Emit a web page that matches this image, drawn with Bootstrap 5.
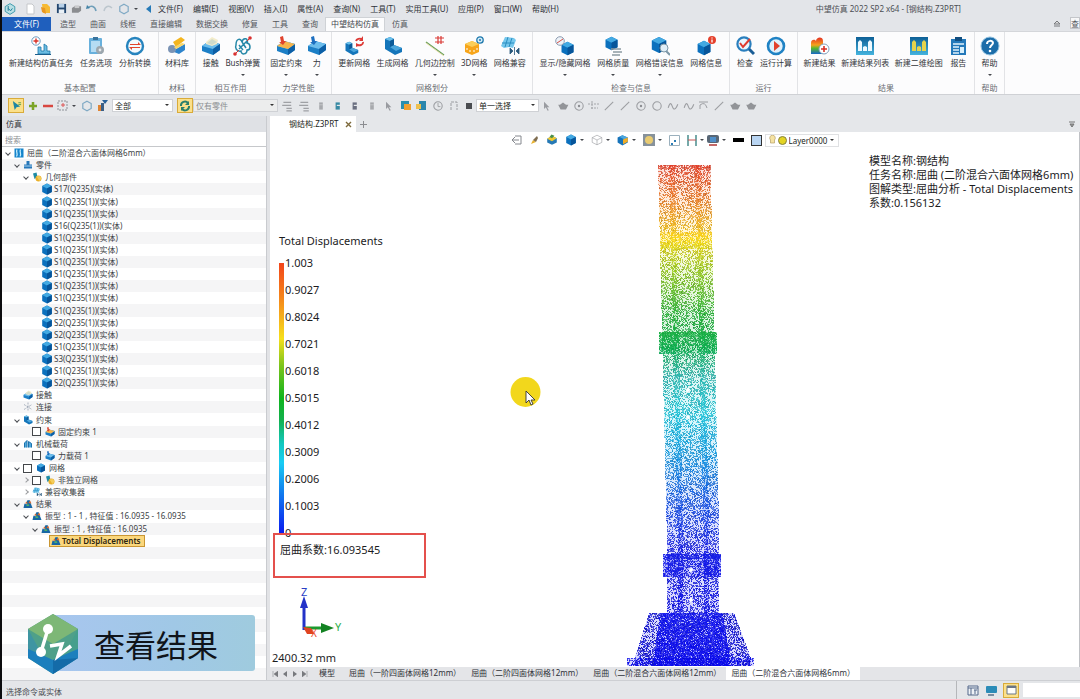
<!DOCTYPE html>
<html lang="zh-CN">
<head>
<meta charset="utf-8">
<meta name="viewport" content="width=device-width, initial-scale=1">
<title>中望仿真 2022 SP2 x64 - [钢结构.Z3PRT]</title>
<link href="https://cdn.jsdelivr.net/npm/bootstrap@5.3.0/dist/css/bootstrap.min.css" rel="stylesheet">
<style>
body{font:8px/12px "Noto Sans","Noto Sans CJK SC",sans-serif;color:#2f3238;background:#e5e7ea;border-left:2px solid #0c0c0e;height:100vh;overflow:hidden}
button,select,input{font:inherit;color:inherit}
button{background:none;border:0;padding:0}
svg{display:block;flex:none}
a{color:inherit;text-decoration:none}
.i20{width:20px;height:20px}.i12{width:12px;height:12px}.i10{width:10px;height:10px}
.titlebar{height:17px;background:#e3e5e9}
.quick{width:156px;padding-left:2px}
.menus{gap:10px}
.apptitle{margin-right:119px;color:#4c4f55}
.rtabs{height:14px;color:#53565c;background:#e3e5e9}
.rtabs a{padding:1px 7px 0}
.rtabs .filetab{background:#1f5fbd;color:#fff;width:49px;margin-right:2px;text-align:center}
.rtabs .on{background:#fcfcfd;border:1px solid #cfd2d6;border-bottom:0;padding:0 5px;color:#45484e}
.cutbox{width:10px;height:12px;background:#f7f7f8;border:1px solid #c4c6ca;overflow:hidden}
.ribbon{height:64px;background:#fcfcfd;border-top:1px solid #d4d6da;border-bottom:1px solid #cfd1d5}
.rgroup{border-right:1px solid #e2e3e6;color:#33363b}
.rgroup button{white-space:nowrap;display:flex;flex-direction:column;align-items:center;gap:1px}
.rname{color:#6b6e74;text-align:center}
.caret{width:0;height:0;border:2px solid transparent;border-top:2px solid #44474c;border-bottom:0}
.g1{width:157px}.g2{width:37px}.g3{width:70px}.g4{width:66px}.g5{width:201px}.g6{width:197px}.g7{width:68px}.g8{width:177px}.g9{width:30px}
.toolbar{height:21px;padding-left:6px}
.lit{width:16px;height:15px;background:#fbe08a;border:1px solid #d9ab3a;display:flex;align-items:center;justify-content:center}
.picker{position:relative}
.picker select{appearance:none;width:100%;height:13px;line-height:11px;padding:0 2px;border:1px solid #cfd1d5;border-radius:0;background:#fff;display:block;color:#1d1f22}
.picker select:disabled{background:#eceded;color:#8b8d91;opacity:1}
.picker::after{content:"";position:absolute;right:4px;top:5px;border:2px solid transparent;border-top-color:#333;border-bottom:0}
.side{width:265px;border-right:1px solid #c9cbcf;background:#fff}
.sidehead{height:16px;background:#dfe1e5;padding:2px 4px}
.search{height:15px;border:0;border-bottom:1px solid #c6c8cb;padding:0 3px;outline:0;border-radius:0;width:100%}
.search::placeholder{color:#8d9094;opacity:1}
.tree{display:grid;grid-template-rows:repeat(44,minmax(0,1fr))}
.node{display:flex;align-items:center;white-space:nowrap;color:#3c3f45;padding-left:1px}
.node:nth-child(even){background:#f5f5f6}
.node svg{margin-right:1px}
.chev{width:9px;height:9px;margin-right:2px;flex:none;display:flex;align-items:center;justify-content:center}
.chev::before{content:"";width:4px;height:4px;border:solid #4a4d52;border-width:0 1px 1px 0;transform:rotate(45deg)}
.chev.shut::before{transform:rotate(-45deg);border-color:#9a9c9f}
.chev.none::before{display:none}
.l1{padding-left:10px}.l2{padding-left:19px}.l3{padding-left:28px}
.node input{appearance:none;width:9px;height:9px;border:1px solid #44474b;background:#fff;margin:0 4px 0 0}
.picked{background:#fbd77c;border:1px solid #c99633;padding:0 3px 0 1px;height:12px;font-weight:600;color:#2b2410;display:flex;align-items:center;margin-left:-3px}
.stamp{left:26px;bottom:7px;width:227px;height:58px}
.stamp div{margin-left:24px;flex:1;height:56px;border-radius:3px;background:linear-gradient(90deg,#a8c6ef,#a0c8e6 60%,#9fcbde);font-size:31px;line-height:60px;color:#10141a;padding-left:42px}
.stamp svg{position:absolute;left:0;top:-1px;width:50px;height:60px}
.split{width:3px;background:#e2e3e6}
.doctabs{height:16px;background:#e5e7ea}
.doctab{background:#fff;width:86px;color:#1d1f22;padding-left:19px;gap:6px}
.view{background:#fff;border-right:1px solid #bfc1c5;position:relative}
.viewbar{height:16px;gap:3px}
.layer{border:1px solid #e0e1e3;width:74px;height:13px;padding:0 3px;gap:2px}
.layer .picker select{border:0;height:11px;padding:0}
.layer .picker::after{top:4px;right:1px}
.viewbar .blk{width:11px;height:4px;background:#000}
.viewbar .sq{width:11px;height:11px;background:#b9d5f2;border:1px solid #333}
.legendcol{width:240px;padding:86px 0 0 2px;font-size:11px;line-height:14px;color:#1c1c1e}
.ltitle{padding-left:7px}
.scale{margin:15px 0 0 7px;height:270px}
.scale i{width:5px;background:linear-gradient(#f2451a 0,#f5861a 13%,#f6df1c 28%,#7cc41c 38%,#10b41c 50%,#12b04c 58%,#12c8c0 67%,#18ccf4 74%,#1284ee 84%,#0a1cf0 100%)}
.scale ol{list-style:none;margin:-7px 0 -7px;padding:0 0 0 1px;display:flex;flex-direction:column;justify-content:space-between}
.factor{width:153px;height:45px;border:2px solid #e4504c;padding:8px 5px;margin-left:1px}
.size{font-size:11px;line-height:18px}
.info{width:210px;padding-top:6px;font-size:11px;line-height:14px;color:#1c1c1e;white-space:nowrap}
.mouse{left:240px;top:244px;width:32px;height:32px}
.sheets{height:13px;background:#e4e5e8;white-space:nowrap}
.sheets a{padding:0 5px}
.sheets .on{background:#fff}
.statusbar{height:19px;background:#e4e6e9;border-top:1px solid #cdcfd3;padding-left:4px;color:#4a4d52}
.coords{width:57px;height:14px;border:0;background:#fff;border-radius:0}
.trays{border-left:1px solid #b5b7ba;padding-left:10px;gap:6px}
</style>
</head>
<body class="d-flex flex-column">
<svg width="0" height="0" class="position-absolute" aria-hidden="true"><defs>
<linearGradient id="gr" x1="0" y1="0" x2="0" y2="1"><stop stop-color="#0d5f96"/><stop offset="1" stop-color="#45b4de"/></linearGradient>
<linearGradient id="rain" x1="0" y1="0" x2="0" y2="1"><stop stop-color="#e43022"/><stop offset=".45" stop-color="#f6a21c"/><stop offset=".65" stop-color="#58b82c"/><stop offset="1" stop-color="#1668c8"/></linearGradient>
<symbol id="cube" viewBox="0 0 20 20"><path d="M10 1l8 4v10l-8 4-8-4V5z" fill="#0b70bd"/><path d="M10 1l8 4-8 4-8-4z" fill="#43a9e2"/><path d="M10 9l8-4v10l-8 4z" fill="#07559a"/></symbol>
<symbol id="slab" viewBox="0 0 20 20"><path d="M1 10l7-5 11 3v6l-7 5-11-4z" fill="#1c7fc6"/><path d="M1 10l7-5 11 3-7 5z" fill="#6cbdec"/><path d="M12 13l7-5v6l-7 5z" fill="#0c5fa6"/></symbol>
<symbol id="task" viewBox="0 0 20 20"><path d="M7 18V11h3v4h3V8l3 2v5h3v3z" fill="#6cbce2" stroke="#1a76a8" stroke-width=".8"/><path d="M4 18.500h16" stroke="#1c5f8c"/><circle cx="5" cy="5" r="4.200" fill="#fff" stroke="#6d9abf"/><path d="M5 2.500v5M2.500 5h5" stroke="#d93025" stroke-width="1.400"/></symbol>
<symbol id="clip" viewBox="0 0 20 20"><rect x="3" y="2" width="13" height="16" rx="1" fill="#68b0dc"/><rect x="5" y="5" width="9" height="11" fill="#b5dcf3"/><rect x="7" y="1" width="5" height="3" fill="#39749e"/><circle cx="14" cy="14" r="4" fill="#9da7ae"/><circle cx="14" cy="14" r="1.400" fill="#e5e9ec"/></symbol>
<symbol id="swap" viewBox="0 0 20 20"><circle cx="10" cy="10" r="8" fill="#f4fafe" stroke="#2784be" stroke-width="2.400"/><path d="M5 8h8V6l3 3H5zM15 12H7v2l-3-3h11z" fill="#e2452d"/></symbol>
<symbol id="mat" viewBox="0 0 20 20"><path d="M6 6l8-5 4 3-9 7z" fill="#f4b51e"/><path d="M9 13l9-5v6l-6 4-5-2z" fill="#2d84cc"/><circle cx="5" cy="13" r="4" fill="#7a93b5"/><path d="M9 13l9-5-3-1-8 4z" fill="#f9d565"/></symbol>
<symbol id="contact" viewBox="0 0 20 20"><use href="#slab"/><path d="M5 6l6-5 6 3-1 4-5 2-6-2z" fill="#f3eccb"/><path d="M6 7l5-4 5 3-5 3z" fill="#cfdbcc"/></symbol>
<symbol id="bush" viewBox="0 0 20 20"><path d="M3 9c0-7 5-7 6-3 1-5 7-4 5 1 4 1 4 7 0 7 0 5-6 5-6 1-5 1-6-4-5-6zM6 13l9-9M6 9l4 5M9 6l4 6" fill="none" stroke="#2688a8" stroke-width="1.500"/><path d="M2 18l4-4M14 5l3-3" stroke="#d93030"/><circle cx="17" cy="2" r="1.800" fill="#d93030"/><circle cx="2" cy="18" r="1.800" fill="#d93030"/></symbol>
<symbol id="fix" viewBox="0 0 20 20"><use href="#slab"/><path d="M1 10l7-5 11 3-7 5z" fill="#f6b44c"/><path d="M4 1l3-1 1 5h2l-3 4-4-3h2z" fill="#e0432d"/></symbol>
<symbol id="force" viewBox="0 0 20 20"><use href="#slab"/><path d="M4 1l3-1 1 5h2l-3 4-4-3h2z" fill="#1d6fc0"/></symbol>
<symbol id="ell" viewBox="0 0 20 20"><path d="M2 3l5-2 4 2v6l8 3v4l-7 3-10-6z" fill="#1475ba"/><path d="M2 3l5-2 4 2-4 2z" fill="#6cc0ea"/><path d="M7 11l4-2 8 3-6 3z" fill="#4aa5db"/><path d="M7 5l4-2v6l-4 2z" fill="#0d5b98"/></symbol>
<symbol id="remesh" viewBox="0 0 20 20"><use href="#ell" x="0" y="5" width="15" height="15"/><path d="M12 5a4 3 0 0 1 6-2M19 6a4 3 0 0 1-6 3" fill="none" stroke="#dd3a36" stroke-width="1.800"/><path d="M19 0v5h-4zM12 11V7l4 2z" fill="#dd3a36"/></symbol>
<symbol id="edge" viewBox="0 0 20 20"><path d="M1 6l18 13" stroke="#6aa05c" stroke-width="1.400"/><path d="M1 7l18 13" stroke="#e7d9a0" stroke-width=".8"/><path d="M10 2h9M10 6h9M13 0v8M16 0v8" stroke="#d93a36" stroke-width="1.200"/></symbol>
<symbol id="mesh3" viewBox="0 0 20 20"><path d="M8 5l7 3v8l-7 3-7-3V8z" fill="#f7a51a"/><path d="M8 5l7 3-7 3-7-3z" fill="#fbce58"/><path d="M3 12v2M6 14v2M10 14v2M13 12v2" stroke="#fff"/><circle cx="16" cy="4" r="3.200" fill="#d4ecf8" stroke="#2079ad" stroke-width="1.300"/><circle cx="16" cy="4" r="1" fill="#2079ad"/></symbol>
<symbol id="compat" viewBox="0 0 20 20"><path d="M1 10l4-9 9 1 2 2-3 8-4-1-5 1z" fill="#75c7ec"/><path d="M8 1L5 11M12 2L9 11M2 7l12 0" stroke="#2b8dc0"/><path d="M10 12v6l3-3zM19 12v6l-3-3zM14.500 11v8" fill="#28587c" stroke="#28587c" stroke-width=".8"/></symbol>
<symbol id="show" viewBox="0 0 20 20"><use href="#cube" x="5" y="5" width="15" height="15"/><circle cx="5" cy="5" r="4.300" fill="#eef3f8" stroke="#8e9db2"/><path d="M2 7l6-4" stroke="#d84c42"/></symbol>
<symbol id="qual" viewBox="0 0 20 20"><use href="#cube" x="1" y="0" width="15" height="15"/><path d="M8 13h10M10 16h9M9 19h8" stroke="#8c9aa3" stroke-width="1.500"/></symbol>
<symbol id="err" viewBox="0 0 20 20"><use href="#cube" x="0" y="0" width="18" height="18"/><circle cx="14" cy="12" r="4" fill="#e0eef7" stroke="#7d97a6"/><path d="M16 15l4 4" stroke="#7d97a6" stroke-width="2"/></symbol>
<symbol id="minfo" viewBox="0 0 20 20"><use href="#cube" x="0" y="4" width="16" height="16"/><circle cx="16" cy="4" r="4" fill="#e5402c"/><path d="M16 1.500v1M16 3.500v3" stroke="#fff" stroke-width="1.300"/></symbol>
<symbol id="check" viewBox="0 0 20 20"><circle cx="9" cy="8" r="6.600" fill="#eaf5fc" stroke="#2a7fbe" stroke-width="2.200"/><path d="M14 13l5 5" stroke="#1b5e96" stroke-width="3"/><path d="M5 7l3 4 7-8" fill="none" stroke="#e03a2e" stroke-width="2"/></symbol>
<symbol id="run" viewBox="0 0 20 20"><circle cx="10" cy="10" r="8" fill="#dff0fb" stroke="#1f82c4" stroke-width="2.600"/><path d="M8 5l6 5-6 5z" fill="#e2402c"/></symbol>
<symbol id="newres" viewBox="0 0 20 20"><path d="M1 18V7c0-4 4-4 5-2 0-4 7-5 7 0v4h3v9z" fill="url(#rain)"/><circle cx="14" cy="13" r="5" fill="#fff" stroke="#86a3bd"/><path d="M14 10v6M11 13h6" stroke="#d93025" stroke-width="1.600"/></symbol>
<symbol id="reslist" viewBox="0 0 20 20"><rect x="1" y="1" width="18" height="18" fill="url(#gr)"/><path d="M3 15V6l2-2 2 2v9zM8 15v-4l2-1 2 1v4zM13 15V6l2-2 2 2v9z" fill="#effaff"/></symbol>
<symbol id="plot" viewBox="0 0 20 20"><rect x="1" y="1" width="18" height="18" fill="url(#gr)"/><path d="M3 15V6l2-2 2 2v9zM8 15v-4l2-1 2 1v4zM13 15V6l2-2 2 2v9z" fill="#e5d34c"/></symbol>
<symbol id="report" viewBox="0 0 20 20"><rect x="3" y="3" width="15" height="16" fill="#2479ba"/><rect x="7" y="1" width="7" height="4" fill="#124e80"/><path d="M5 8h11M5 11h6M5 14h6M5 17h6" stroke="#e2f2fc" stroke-width="1.400"/><rect x="12" y="11" width="4" height="6" fill="#d8effb"/></symbol>
<symbol id="help" viewBox="0 0 20 20"><circle cx="10" cy="10" r="9" fill="#1c6da9" stroke="#8fc0df"/><path d="M7 8c0-4 6-4 6-1 0 2-3 2-3 5" fill="none" stroke="#fff" stroke-width="2"/><circle cx="10" cy="15" r="1.300" fill="#fff"/></symbol>
<symbol id="hex" viewBox="0 0 20 20"><path d="M10 2l7 4v8l-7 4-7-4V6z" fill="none" stroke="#7fa9c4" stroke-width="2"/></symbol>
<symbol id="dotline" viewBox="0 0 20 20"><path d="M3 17L17 3" stroke="#9c9ea2" stroke-width="1.800"/></symbol>
<symbol id="gcirc" viewBox="0 0 20 20"><circle cx="10" cy="10" r="7" fill="none" stroke="#9c9ea2" stroke-width="1.800"/></symbol>
<symbol id="gdot" viewBox="0 0 20 20"><use href="#gcirc"/><circle cx="10" cy="10" r="2" fill="#8b8d91"/></symbol>
<symbol id="gwave" viewBox="0 0 20 20"><path d="M2 13c3-10 5-8 7-2s5 6 9-4" fill="none" stroke="#9c9ea2" stroke-width="1.800"/></symbol>
<symbol id="gpot" viewBox="0 0 20 20"><path d="M2 8h3l5-4 5 4h4l-4 8H6z" fill="#929498"/></symbol>
<symbol id="gcur" viewBox="0 0 20 20"><path d="M5 3l9 9-4 0 3 5-2 1-3-6-3 3z" fill="#999ba0"/></symbol>
<symbol id="gstk" viewBox="0 0 20 20"><path d="M4 4h13M2 9h15M9 14h9M9 18h9" stroke="#9fa1a5" stroke-width="2"/></symbol>
<symbol id="gbar" viewBox="0 0 20 20"><path d="M7 4h6v12H7z" fill="#a7a9ad"/><path d="M7 8h6" stroke="#d7d8da"/></symbol>
<symbol id="bbar" viewBox="0 0 20 20"><path d="M6 4h7v12H6z" fill="#378aa4"/><path d="M8 8h7v2H8z" fill="#e5e7ea"/></symbol>
<symbol id="dbar" viewBox="0 0 20 20"><path d="M6 4h7v12H6z" fill="#6a6f80"/><path d="M8 8h7v2H8z" fill="#e5e7ea"/></symbol>
<symbol id="root" viewBox="0 0 20 20"><rect x="1" y="1" width="18" height="18" fill="#1685cc"/><path d="M5 17c4-6-2-8 1-14M12 17c4-6-2-8 1-14" stroke="#c9effe" stroke-width="2.500" fill="none"/></symbol>
<symbol id="part" viewBox="0 0 20 20"><path d="M7 2h6v7h5v8H2V9h5z" fill="#2878b9"/><path d="M2 12h16" stroke="#a9d3ef" stroke-width="2"/></symbol>
<symbol id="geo" viewBox="0 0 20 20"><path d="M2 3l7-2 2 9-6 4z" fill="#1e8ba4"/><circle cx="13" cy="13" r="6" fill="#eab02a"/><path d="M9 9l7-1 3 5-4 5z" fill="#f4cd5b"/></symbol>
<symbol id="link" viewBox="0 0 20 20"><path d="M10 1v18M2 5l16 10M2 15L18 5" stroke="#8a97a8" stroke-width="1.400" stroke-dasharray="4 2"/></symbol>
<symbol id="load" viewBox="0 0 20 20"><path d="M3 17V8l5-5v14M11 17V5l6 4v8" fill="#51a9dc" stroke="#1c72ad" stroke-width="2"/></symbol>
<symbol id="res" viewBox="0 0 20 20"><path d="M1 18l2-9 4 2 1-8 5-1 3 8 3 8z" fill="#1767a4"/><path d="M4 9l3-4 3 4zM11 8l3-5 3 6z" fill="#db6a2c"/><path d="M6 14l4-5 3 5z" fill="#51b068"/></symbol>
<symbol id="app" viewBox="0 0 20 20"><path d="M10 1l8 5v8l-8 5-8-5V6z" fill="#b9dfe4" stroke="#3395a8" stroke-width="1.500"/><path d="M7 5v8M7 9l4 4 3-4" stroke="#1e7a96" stroke-width="1.600" fill="none"/></symbol>
</defs></svg>

<header class="titlebar d-flex align-items-center">
 <div class="quick d-flex align-items-center gap-1">
  <svg class="i12" ><use href="#app"/></svg>
  <svg class="ms-1" width="12" height="12" viewBox="0 0 12 12"><path d="M3 1h5l2 2v8H3z" fill="#fff" stroke="#c5c7ca"/></svg>
  <svg width="12" height="12" viewBox="0 0 12 12"><path d="M2 1h5l3 3v6H3z" fill="#f6ba34"/><path d="M1 4l4 1 1 6-4-2z" fill="#e99722"/></svg>
  <svg width="11" height="11" viewBox="0 0 12 12"><path d="M1 1h10v10H1z" fill="#23466f"/><path d="M3 1h6v4H3z" fill="#b7d0e8"/><path d="M3 7h6v4H3z" fill="#e9f0f6"/></svg>
  <svg width="11" height="12" viewBox="0 0 12 12"><path d="M1 5l3-2h7v5l-3 2H1z" fill="#8b8d90"/><path d="M4 2h5v3H4z" fill="#c9cacc"/></svg>
  <svg width="12" height="12" viewBox="0 0 12 12"><path d="M2 5c3-3 7-2 8 3" fill="none" stroke="#6f9fb9" stroke-width="1.600"/><path d="M0 6l1-4 3 3z" fill="#4383a6"/></svg>
  <svg width="12" height="12" viewBox="0 0 12 12"><path d="M10 5C7 2 3 3 2 8" fill="none" stroke="#bcc6cd" stroke-width="1.400"/></svg>
  <svg class="i12"><use href="#hex"/></svg>
  <span class="caret"></span>
  <svg class="ms-1" width="5" height="8" viewBox="0 0 5 8"><path d="M5 0v8L0 4z" fill="#267ab8"/></svg>
 </div>
 <nav class="menus d-flex text-nowrap"><a href="#">文件(F)</a><a href="#">编辑(E)</a><a href="#">视图(V)</a><a href="#">插入(I)</a><a href="#">属性(A)</a><a href="#">查询(N)</a><a href="#">工具(T)</a><a href="#">实用工具(U)</a><a href="#">应用(P)</a><a href="#">窗口(W)</a><a href="#">帮助(H)</a></nav>
 <div class="apptitle ms-auto text-nowrap">中望仿真 2022 SP2 x64 - [钢结构.Z3PRT]</div>
</header>
<nav class="rtabs d-flex text-nowrap"><a class="filetab" href="#">文件(F)</a><a href="#">造型</a><a href="#">曲面</a><a href="#">线框</a><a href="#">直接编辑</a><a href="#">数据交换</a><a href="#">修复</a><a href="#">工具</a><a href="#">查询</a><a class="on" href="#">中望结构仿真</a><a href="#">仿真</a>
 <svg class="ms-auto me-1 align-self-center" width="10" height="8" viewBox="0 0 10 8"><path d="M2 4l3-3 3 3zM2 6h6" fill="#ddd" stroke="#77797d"/></svg><div class="cutbox ms-1">查</div></nav>

<section class="ribbon d-flex">
 <div class="rgroup g1 d-flex flex-column"><div class="d-flex justify-content-evenly flex-grow-1 pt-1"><button><svg class="i20"><use href="#task"/></svg>新建结构仿真任务</button><button><svg class="i20"><use href="#clip"/></svg>任务选项</button><button><svg class="i20"><use href="#swap"/></svg>分析转换</button></div><div class="rname">基本配置</div></div>
 <div class="rgroup g2 d-flex flex-column"><div class="d-flex justify-content-evenly flex-grow-1 pt-1"><button><svg class="i20"><use href="#mat"/></svg>材料库</button></div><div class="rname">材料</div></div>
 <div class="rgroup g3 d-flex flex-column"><div class="d-flex justify-content-evenly flex-grow-1 pt-1"><button><svg class="i20"><use href="#contact"/></svg>接触</button><button><svg class="i20"><use href="#bush"/></svg>Bush弹簧<span class="caret mt-1"></span></button></div><div class="rname">相互作用</div></div>
 <div class="rgroup g4 d-flex flex-column"><div class="d-flex justify-content-evenly flex-grow-1 pt-1"><button><svg class="i20"><use href="#fix"/></svg>固定约束<span class="caret mt-1"></span></button><button><svg class="i20"><use href="#force"/></svg>力<span class="caret mt-1"></span></button></div><div class="rname">力学性能</div></div>
 <div class="rgroup g5 d-flex flex-column"><div class="d-flex justify-content-evenly flex-grow-1 pt-1"><button><svg class="i20"><use href="#remesh"/></svg>更新网格</button><button><svg class="i20"><use href="#ell"/></svg>生成网格</button><button><svg class="i20"><use href="#edge"/></svg>几何边控制<span class="caret mt-1"></span></button><button><svg class="i20"><use href="#mesh3"/></svg>3D网格<span class="caret mt-1"></span></button><button><svg class="i20"><use href="#compat"/></svg>网格兼容</button></div><div class="rname">网格划分</div></div>
 <div class="rgroup g6 d-flex flex-column"><div class="d-flex justify-content-evenly flex-grow-1 pt-1"><button><svg class="i20"><use href="#show"/></svg>显示/隐藏网格<span class="caret mt-1"></span></button><button><svg class="i20"><use href="#qual"/></svg>网格质量<span class="caret mt-1"></span></button><button><svg class="i20"><use href="#err"/></svg>网格错误信息<span class="caret mt-1"></span></button><button><svg class="i20"><use href="#minfo"/></svg>网格信息</button></div><div class="rname">检查与信息</div></div>
 <div class="rgroup g7 d-flex flex-column"><div class="d-flex justify-content-evenly flex-grow-1 pt-1"><button><svg class="i20"><use href="#check"/></svg>检查</button><button><svg class="i20"><use href="#run"/></svg>运行计算</button></div><div class="rname">运行</div></div>
 <div class="rgroup g8 d-flex flex-column"><div class="d-flex justify-content-evenly flex-grow-1 pt-1"><button><svg class="i20"><use href="#newres"/></svg>新建结果</button><button><svg class="i20"><use href="#reslist"/></svg>新建结果列表</button><button><svg class="i20"><use href="#plot"/></svg>新建二维绘图</button><button><svg class="i20"><use href="#report"/></svg>报告</button></div><div class="rname">结果</div></div>
 <div class="rgroup g9 d-flex flex-column"><div class="d-flex justify-content-evenly flex-grow-1 pt-1"><button><svg class="i20"><use href="#help"/></svg>帮助<span class="caret mt-1"></span></button></div><div class="rname">帮助</div></div>
</section>

<section class="toolbar d-flex align-items-center">
 <div class="d-flex align-items-center justify-content-between" style="width:104px">
  <button class="lit" aria-label="选择"><svg width="11" height="11" viewBox="0 0 12 12"><path d="M2 1l8 6-4 1-2 3z" fill="#1e86a2"/><path d="M8 3h3M8 5h3" stroke="#58a04a"/></svg></button>
  <svg width="10" height="10" viewBox="0 0 10 10"><path d="M5 1v8M1 5h8" stroke="#7ba428" stroke-width="2.500"/></svg>
  <svg width="10" height="10" viewBox="0 0 10 10"><path d="M0 5h10" stroke="#d84740" stroke-width="2.500"/></svg>
  <svg width="11" height="11" viewBox="0 0 11 11"><path d="M1 1h9v9H1z" fill="none" stroke="#8e9198" stroke-dasharray="2 1"/><path d="M6 3v4M4 5h4" stroke="#d55"/></svg><span class="caret"></span>
  <svg class="i12"><use href="#hex"/></svg>
  <svg class="me-1" width="11" height="11" viewBox="0 0 11 11"><path d="M1 5h3v6H1z" fill="#e08433"/><path d="M4 3h3v8H4z" fill="#3a5f86"/><path d="M5 0h6L8 4z" fill="#26619b"/></svg>
 </div>
 <div class="picker" style="width:61px"><select aria-label="过滤器"><option>全部</option></select></div>
 <button class="lit ms-1" aria-label="过滤刷新"><svg width="12" height="12" viewBox="0 0 12 12"><path d="M2 6a4 4 0 0 1 7-3M10 6a4 4 0 0 1-7 3" fill="none" stroke="#2b7f6c" stroke-width="2"/><path d="M10 1v4H6zM2 11V7h4z" fill="#2b7f6c"/></svg></button>
 <div class="picker" style="width:85px"><select disabled aria-label="范围"><option>仅有零件</option></select></div>
 <div class="d-flex align-items-center justify-content-around" style="width:198px">
  <svg class="i12"><use href="#gstk"/></svg><svg class="i12"><use href="#gstk"/></svg><svg class="i12"><use href="#gbar"/></svg><svg class="i12"><use href="#bbar"/></svg><svg class="i12"><use href="#dbar"/></svg><svg class="i12"><use href="#gbar"/></svg><svg class="i12"><use href="#gcur"/></svg>
  <svg width="11" height="11" viewBox="0 0 11 11"><path d="M1 1h8v8H1z" fill="#2a8fae"/><path d="M4 4h7v6H4z" fill="#f0a02e"/></svg>
  <svg width="11" height="11" viewBox="0 0 11 11"><path d="M3 1h7v9H3z" fill="#2a86ac"/><path d="M0 4h5v5H0z" fill="#eec04c"/></svg>
  <svg class="i12" viewBox="0 0 20 20"><circle cx="10" cy="10" r="7" fill="none" stroke="#9c9ea2" stroke-width="1.800"/><path d="M10 5v6h4" fill="none" stroke="#9c9ea2" stroke-width="1.500"/></svg>
  <svg width="11" height="11" viewBox="0 0 11 11"><path d="M2 10V2h6v8" fill="none" stroke="#9c9ea2" stroke-dasharray="3 1"/></svg>
  <svg width="8" height="8" viewBox="0 0 8 8"><path d="M1 1h6v6H1z" fill="#4a4c50"/></svg>
 </div>
 <div class="picker" style="width:63px"><select aria-label="选择方式"><option>单一选择</option></select></div>
 <div class="d-flex align-items-center justify-content-around" style="width:220px">
  <svg class="i12"><use href="#gcur"/></svg><svg class="i12"><use href="#gpot"/></svg><svg class="i12"><use href="#gdot"/></svg>
  <svg width="11" height="11" viewBox="0 0 11 11"><path d="M0 4h11M3 8h7M4 1v9" stroke="#a4a6aa" stroke-dasharray="2 1"/></svg>
  <svg class="i12"><use href="#dotline"/></svg><svg class="i12"><use href="#dotline"/></svg><svg class="i12"><use href="#gdot"/></svg><svg class="i12"><use href="#gcirc"/></svg><svg class="i12"><use href="#gwave"/></svg><svg class="i12"><use href="#gwave"/></svg>
  <svg width="11" height="11" viewBox="0 0 11 11"><path d="M1 2h9M2 9V5q5-4 7 3" fill="none" stroke="#9c9ea2"/></svg>
  <svg class="i12"><use href="#dotline"/></svg><svg class="i12"><use href="#gpot"/></svg><svg class="i12"><use href="#gpot"/></svg>
 </div>
</section>

<main class="d-flex flex-grow-1" style="min-height:0">
 <aside class="side d-flex flex-column position-relative">
  <div class="sidehead">仿真</div>
  <input class="search" type="text" placeholder="搜索" aria-label="搜索">
  <div class="tree flex-grow-1">
   <div class="node"><span class="chev"></span><svg class="i10"><use href="#root"/></svg>&nbsp;屈曲（二阶混合六面体网格6mm）</div>
   <div class="node l1"><span class="chev"></span><svg class="i10"><use href="#part"/></svg>&nbsp;零件</div>
   <div class="node l2"><span class="chev"></span><svg class="i10"><use href="#geo"/></svg>&nbsp;几何部件</div>
   <div class="node l3"><span class="chev none"></span><svg class="i12"><use href="#cube"/></svg>S17(Q235)(实体)</div>
   <div class="node l3"><span class="chev none"></span><svg class="i12"><use href="#cube"/></svg>S1(Q235(1))(实体)</div>
   <div class="node l3"><span class="chev none"></span><svg class="i12"><use href="#cube"/></svg>S1(Q235(1))(实体)</div>
   <div class="node l3"><span class="chev none"></span><svg class="i12"><use href="#cube"/></svg>S16(Q235(1))(实体)</div>
   <div class="node l3"><span class="chev none"></span><svg class="i12"><use href="#cube"/></svg>S1(Q235(1))(实体)</div>
   <div class="node l3"><span class="chev none"></span><svg class="i12"><use href="#cube"/></svg>S1(Q235(1))(实体)</div>
   <div class="node l3"><span class="chev none"></span><svg class="i12"><use href="#cube"/></svg>S1(Q235(1))(实体)</div>
   <div class="node l3"><span class="chev none"></span><svg class="i12"><use href="#cube"/></svg>S1(Q235(1))(实体)</div>
   <div class="node l3"><span class="chev none"></span><svg class="i12"><use href="#cube"/></svg>S1(Q235(1))(实体)</div>
   <div class="node l3"><span class="chev none"></span><svg class="i12"><use href="#cube"/></svg>S1(Q235(1))(实体)</div>
   <div class="node l3"><span class="chev none"></span><svg class="i12"><use href="#cube"/></svg>S1(Q235(1))(实体)</div>
   <div class="node l3"><span class="chev none"></span><svg class="i12"><use href="#cube"/></svg>S2(Q235(1))(实体)</div>
   <div class="node l3"><span class="chev none"></span><svg class="i12"><use href="#cube"/></svg>S2(Q235(1))(实体)</div>
   <div class="node l3"><span class="chev none"></span><svg class="i12"><use href="#cube"/></svg>S1(Q235(1))(实体)</div>
   <div class="node l3"><span class="chev none"></span><svg class="i12"><use href="#cube"/></svg>S3(Q235(1))(实体)</div>
   <div class="node l3"><span class="chev none"></span><svg class="i12"><use href="#cube"/></svg>S1(Q235(1))(实体)</div>
   <div class="node l3"><span class="chev none"></span><svg class="i12"><use href="#cube"/></svg>S2(Q235(1))(实体)</div>
   <div class="node l1"><span class="chev none"></span><svg class="i10"><use href="#contact"/></svg>&nbsp;接触</div>
   <div class="node l1"><span class="chev none"></span><svg class="i10"><use href="#link"/></svg>&nbsp;连接</div>
   <div class="node l1"><span class="chev"></span><svg class="i10"><use href="#ell"/></svg>&nbsp;约束</div>
   <div class="node l2"><span class="chev none"></span><input type="checkbox" aria-label="固定约束 1"><svg class="i10"><use href="#fix"/></svg>&nbsp;固定约束 1</div>
   <div class="node l1"><span class="chev"></span><svg class="i10"><use href="#load"/></svg>&nbsp;机械载荷</div>
   <div class="node l2"><span class="chev none"></span><input type="checkbox" aria-label="力载荷 1"><svg class="i10"><use href="#force"/></svg>&nbsp;力载荷 1</div>
   <div class="node l1"><span class="chev"></span><input type="checkbox" aria-label="网格"><svg class="i10"><use href="#cube"/></svg>&nbsp;网格</div>
   <div class="node l2"><span class="chev shut"></span><input type="checkbox" aria-label="非独立网格"><svg class="i10"><use href="#geo"/></svg>&nbsp;非独立网格</div>
   <div class="node l2"><span class="chev shut"></span><svg class="i10"><use href="#compat"/></svg>&nbsp;兼容收集器</div>
   <div class="node l1"><span class="chev"></span><svg class="i10"><use href="#res"/></svg>&nbsp;结果</div>
   <div class="node l2"><span class="chev"></span><svg class="i10"><use href="#res"/></svg>&nbsp;振型 : 1 - 1 , 特征值 : 16.0935 - 16.0935</div>
   <div class="node l3"><span class="chev"></span><svg class="i10"><use href="#res"/></svg>&nbsp;振型 : 1 , 特征值 : 16.0935</div>
   <div class="node l3"><span class="chev none"></span><span class="chev none"></span><span class="picked"><svg class="i10"><use href="#res"/></svg>Total Displacements</span></div>
   <div class="node"></div><div class="node"></div><div class="node"></div><div class="node"></div><div class="node"></div><div class="node"></div><div class="node"></div><div class="node"></div><div class="node"></div><div class="node"></div><div class="node"></div>
  </div>
  <div class="stamp position-absolute d-flex"><div>查看结果</div>
   <svg viewBox="0 0 50 60"><path d="M25 0l25 15v29L25 60 0 44V15z" fill="#4fa089"/><path d="M25 0l25 15-25 15L0 15z" fill="#7db776"/><path d="M0 15l12 22L0 44z" fill="#3f95a2"/><path d="M50 15L38 37l12 7z" fill="#459f8c"/><path d="M0 35l12 5 13 6 13-6 12-5v9L25 60 0 44z" fill="#1c7fbd"/><path d="M25 46l25-2-25 16z" fill="#146ba8"/><path d="M20 15l-7 23M22 32l12-2-4 12 13-10" fill="none" stroke="#fff" stroke-width="3.500"/><circle cx="20" cy="15" r="5" fill="#fff"/><circle cx="13" cy="38" r="5" fill="#fff"/></svg>
  </div>
 </aside>
 <div class="split"></div>
 <section class="d-flex flex-column flex-grow-1" style="min-width:0">
  <div class="doctabs d-flex align-items-center"><div class="doctab d-flex align-items-center align-self-stretch text-nowrap">钢结构.Z3PRT<button aria-label="关闭"><svg width="7" height="7" viewBox="0 0 7 7"><path d="M1 1l5 5M6 1L1 6" stroke="#7d6a3c" stroke-width="1.400"/></svg></button></div>
   <svg class="ms-1" width="7" height="7" viewBox="0 0 7 7"><path d="M3.500 0v7M0 3.500h7" stroke="#8b8d91"/></svg>
   <svg class="ms-auto me-1" width="7" height="7" viewBox="0 0 7 7"><path d="M0 1h6M1 3h4L3 6z" stroke="#777" fill="#999"/></svg></div>
  <div class="view d-flex flex-column flex-grow-1" style="min-height:0">
   <div class="viewbar d-flex justify-content-center align-items-center">
    <svg width="12" height="10" viewBox="0 0 12 10"><path d="M4 1h6v8H4M8 5H1l3-3M1 5l3 3" fill="none" stroke="#85888e"/></svg>
    <svg class="mx-1" width="9" height="10" viewBox="0 0 9 10"><path d="M1 9l2-4 3 2z" fill="#e8b230"/><path d="M3 5l4-4 1 2-2 4z" fill="#7f6d50"/></svg>
    <svg class="i12" viewBox="0 0 20 20"><path d="M2 8l8-5 8 4v7l-8 4-8-4z" fill="#2679b5"/><path d="M2 8l8-5 8 4-8 5z" fill="#f0c830"/><path d="M9 1l5 2-4 4-4-2z" fill="#4a8f4c"/></svg>
    <svg class="i12 ms-1"><use href="#cube"/></svg><span class="caret"></span>
    <svg class="ms-1" width="12" height="12" viewBox="0 0 20 20"><path d="M10 2l8 4v8l-8 4-8-4V6zM2 6l8 4 8-4M10 10v8" fill="#fff" stroke="#999b9f"/></svg><span class="caret"></span>
    <svg class="i12 ms-1" viewBox="0 0 20 20"><path d="M9 2l9 4v8l-9 5-8-5V6z" fill="#1673ba"/><path d="M9 2l9 4-5 3-9-4z" fill="#4aa6df"/><path d="M10 9l8-3v7l-8 4z" fill="#f2ad27"/></svg><span class="caret"></span>
    <svg class="ms-1" width="12" height="12" viewBox="0 0 12 12"><path d="M0 0h12v12H0z" fill="#87929b"/><circle cx="6" cy="6" r="4" fill="#e9cb72"/></svg><span class="caret"></span>
    <svg class="ms-1" width="11" height="11" viewBox="0 0 11 11"><path d="M.5.5h10v10H.5z" fill="#fff" stroke="#9bb0bd"/><path d="M5 5h2v2H5zM2 8h2v2H2z" fill="#2c7db5"/></svg>
    <svg class="ms-1" width="10" height="11" viewBox="0 0 10 11"><path d="M1 0v11M9 0v11" stroke="#4a8d8d" stroke-width="1.500"/><path d="M1 5h8" stroke="#c65555"/></svg><span class="caret"></span>
    <svg width="12" height="12" viewBox="0 0 12 12"><rect y="1" width="12" height="8" rx="2" fill="#586776"/><path d="M3 3h6v5H3z" fill="#4f8fc9"/><path d="M2 10h8v2H2z" fill="#c26868"/></svg><span class="caret"></span>
    <span class="blk ms-1"></span><span class="sq ms-1"></span>
    <div class="layer d-flex align-items-center"><svg width="7" height="10" viewBox="0 0 7 10"><path d="M3.500 0a3 3 0 0 1 2 5v3h-4V5a3 3 0 0 1 2-5z" fill="#f5e2a2" stroke="#b59d66" stroke-width=".7"/></svg><svg width="9" height="9" viewBox="0 0 9 9"><circle cx="4.500" cy="4.500" r="4" fill="#e3d322" stroke="#83803e"/></svg><div class="picker flex-grow-1"><select aria-label="图层"><option>Layer0000</option></select></div></div>
   </div>
   <div class="d-flex flex-grow-1 position-relative" style="min-height:0">
    <div class="legendcol d-flex flex-column">
     <div class="ltitle">Total Displacements</div>
     <div class="scale d-flex"><i></i><ol><li>1.003</li><li>0.9027</li><li>0.8024</li><li>0.7021</li><li>0.6018</li><li>0.5015</li><li>0.4012</li><li>0.3009</li><li>0.2006</li><li>0.1003</li><li>0</li></ol></div>
     <div class="factor">屈曲系数:16.093545</div>
     <svg class="mt-2" width="80" height="56" viewBox="0 0 80 56" font-size="11" font-family="Noto Sans" overflow="visible"><path d="M32 44V20" stroke="#2332c8" stroke-width="3"/><path d="M28 22l4-12 4 12z" fill="#2332c8"/><path d="M33 42h17" stroke="#1c9a2e" stroke-width="3"/><path d="M49 37l13 5-13 5z" fill="#138222"/><path d="M31 41l8 1 3 6-7 0z" fill="#e04420"/><text x="29" y="10" fill="#2a3ec6">Z</text><text x="63" y="45" fill="#2fae4c">Y</text><text x="39" y="51" fill="#ea4a28" font-size="10">X</text></svg>
     <div class="size mt-auto">2400.32 mm</div>
    </div>
    <div class="flex-grow-1 d-flex justify-content-center align-items-end"><canvas id="cloud" width="132" height="504" role="img" aria-label="位移云图"></canvas></div>
    <div class="info">模型名称:钢结构<br>任务名称:屈曲 (二阶混合六面体网格6mm)<br>图解类型:屈曲分析 - Total Displacements<br>系数:0.156132</div>
   </div>
   <svg class="mouse position-absolute" viewBox="0 0 32 32"><circle cx="15.500" cy="16" r="15" fill="#f2d71c"/><path d="M16 15v12l3-3 2 5 2-1-2-4h4z" fill="#fff" stroke="#333" stroke-width=".9"/></svg>
  </div>
  <nav class="sheets d-flex"><div class="d-flex align-items-center justify-content-around" style="width:40px">
   <svg width="6" height="6" viewBox="0 0 6 6"><path d="M1 0v6M6 0v6L2 3z" fill="#77797d" stroke="#77797d" stroke-width=".5"/></svg><svg width="6" height="6" viewBox="0 0 6 6"><path d="M5 0v6L1 3z" fill="#77797d"/></svg><svg width="6" height="6" viewBox="0 0 6 6"><path d="M1 0v6l4-3z" fill="#77797d"/></svg><svg width="6" height="6" viewBox="0 0 6 6"><path d="M5 0v6M0 0v6l4-3z" fill="#77797d" stroke="#77797d" stroke-width=".5"/></svg></div>
   <a class="mx-1" href="#">模型</a><a href="#">屈曲（一阶四面体网格12mm）</a><a href="#">屈曲（二阶四面体网格12mm）</a><a href="#">屈曲（二阶混合六面体网格12mm）</a><a class="on" href="#">屈曲（二阶混合六面体网格6mm）</a></nav>
 </section>
</main>
<footer class="statusbar d-flex align-items-center"><span class="pt-1">选择命令或实体</span>
 <div class="trays ms-auto me-1 d-flex align-items-center align-self-stretch">
  <svg width="12" height="11" viewBox="0 0 12 11"><path d="M1 1h10v9H1z" fill="#eef2f6" stroke="#54698a"/><path d="M1 3h10M4 3v7M7 5h3M8 5v4" stroke="#54698a"/></svg>
  <svg width="12" height="11" viewBox="0 0 12 11"><rect x="1" y="1" width="11" height="7" rx="1" fill="#2b8cb8"/><path d="M3 10h6" stroke="#56718a" stroke-width="1.500"/></svg>
  <button class="lit" aria-label="窗口"><svg width="11" height="10" viewBox="0 0 11 10"><path d="M1 1h9v8H1z" fill="#fdfdfb" stroke="#6b7686"/><path d="M1 2h9" stroke="#6b7686" stroke-width="2"/></svg></button></div>
 <input class="coords" type="text" aria-label="坐标"></footer>

<script src="https://cdn.jsdelivr.net/npm/bootstrap@5.3.0/dist/js/bootstrap.bundle.min.js"></script>
<script>
// Node cloud of the buckled column, coloured by displacement along its height.
var ctx = document.getElementById('cloud').getContext('2d');
var seed = 7;
function rnd() { seed = (seed * 1664525 + 1013904223) % 4294967296; return seed / 4294967296; }
var stops = [[0,236,60,40],[35,248,130,40],[76,254,220,20],[105,165,212,30],[150,40,185,55],[185,12,180,80],[212,40,190,180],[250,30,208,230],[290,15,160,235],[335,25,95,240],[385,22,30,240],[504,8,8,245]];
function colour(y) {
  for (var k = 1; k < stops.length - 1 && stops[k][0] < y; k++);
  var a = stops[k - 1], b = stops[k], t = (y - a[0]) / (b[0] - a[0]);
  return [1, 2, 3].map(function (c) { return Math.round(a[c] + (b[c] - a[c]) * t); });
}
function dots(x0, x1, y, density, shade) {
  var c = colour(y);
  for (var x = Math.round(x0); x < x1; x++) {
    if (rnd() > density) { ctx.fillStyle = 'rgba(' + c + ',.16)'; }
    else { var v = shade * rnd(); ctx.fillStyle = 'rgba(' + c.map(function (n) { return Math.round(n * (1 - v)); }) + ',' + (0.6 + rnd() * 0.4) + ')'; }
    ctx.fillRect(x, y, 1, 1);
  }
}
for (var y = 2; y < 503; y++) {
  var left = 34 + 9 * Math.min(1, y / 380), right = left + 52;
  if (y < 450) {
    dots(left, right, y, y < 6 ? 0.8 : 0.5, 0.2);
    dots(left + 11, left + 16, y, 0.4, 0.1);
    dots(left + 37, left + 42, y, 0.45, 0.1);
    if (y > 68 && y < 86) dots(left, right, y, 0.4, 0);
  }
  if (y > 168 && y < 191) { dots(35, 93, y, y < 174 ? 0.8 : 0.25, 0.1); dots(35, 52, y, 0.6, 0.1); dots(78, 93, y, 0.6, 0.1); }
  if (y > 390 && y < 414) { dots(39, 97, y, y < 396 ? 0.75 : 0.2, 0.1); dots(39, 55, y, 0.45, 0.1); dots(80, 97, y, 0.45, 0.1); }
  if (y >= 450) {
    var w = Math.min(1, (y - 450) / 46);
    dots(25 - 15 * w, 110 + 17 * w, y, 0.55, 0.35);
    dots(36 - 6 * w, 98 + 8 * w, y, 0.8, 0.05);
    if (y > 494) dots(3, 130, y, 0.5, 0.1);
  }
}
ctx.fillStyle = '#fff';
[[67, 407], [67, 437], [64, 227], [64, 254]].forEach(function (p) { ctx.beginPath(); ctx.arc(p[0], p[1], 2, 0, 7); ctx.fill(); });
</script>
</body>
</html>
